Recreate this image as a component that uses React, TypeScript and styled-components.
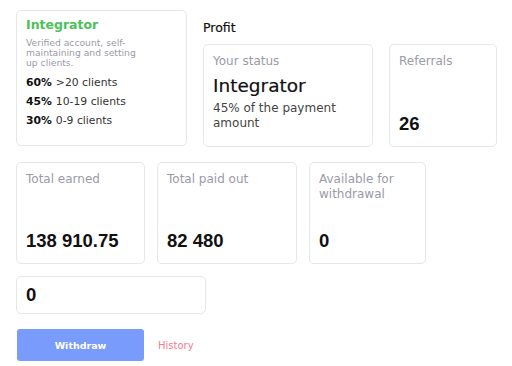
import React from "react";
import styled, { createGlobalStyle } from "styled-components";

const Global = createGlobalStyle`
  html, body { margin: 0; padding: 0; background: #fff; }
  body { font-family: "DejaVu Sans", "Noto Sans", sans-serif; color: #222; }
`;

const Page = styled.div`
  padding: 10px 0 0 16px;
`;

const TopRow = styled.div`
  display: flex;
  gap: 16px;
  align-items: flex-start;
`;

const Card = styled.div<{ $w: number; $h: number }>`
  box-sizing: border-box;
  flex: 0 0 auto;
  width: ${(p) => p.$w}px;
  height: ${(p) => p.$h}px;
  border: 1px solid #e6e7ec;
  border-radius: 5px;
  background: #fff;
  display: flex;
  flex-direction: column;
`;

const InfoCard = styled(Card)`
  padding: 5px 9px 6px;
`;

const Green = styled.div`
  color: #4cc15a;
  font-size: 12.5px;
  font-weight: 600;
  line-height: 18px;
`;

const Desc = styled.div`
  color: #9a9aa8;
  font-size: 9.2px;
  line-height: 10px;
  margin-top: 4px;
  width: 122px;
`;

const Tier = styled.div`
  font-size: 10.8px;
  color: #333;
  line-height: 19px;
  b { font-weight: 700; color: #111; margin-right: 4px; }
`;

const Tiers = styled.div`
  margin-top: 5px;
`;

const RightCol = styled.div`
  display: flex;
  flex-direction: column;
`;

const Title = styled.div`
  font-size: 12.5px;
  color: #111;
  line-height: 16px;
  margin-top: 10px;
  -webkit-text-stroke: 0.2px #111;
`;

const CardRow = styled.div<{ $gap: number }>`
  display: flex;
  gap: ${(p) => p.$gap}px;
`;

const StatCard = styled(Card)`
  padding: 9px 8px 7px 9px;
`;

const Label = styled.div`
  color: #9a9aa8;
  font-size: 12px;
  line-height: 15px;
`;

const Big = styled.div`
  font-size: 18.5px;
  color: #111;
  margin-top: 5px;
  line-height: 24px;
  -webkit-text-stroke: 0.2px #111;
`;

const Sub = styled.div`
  font-size: 12px;
  line-height: 14.5px;
  color: #444;
  margin-top: 3px;
`;

const Value = styled.div`
  margin-top: auto;
  font-family: "Liberation Sans", Arial, sans-serif;
  font-weight: 700;
  font-size: 18.5px;
  line-height: 22px;
  color: #111;
  margin-bottom: 4px;
`;

const Bottom = styled.div`
  margin-top: 12px;
`;

const Input = styled.div`
  box-sizing: border-box;
  width: 190px;
  height: 38px;
  border: 1px solid #e6e7ec;
  border-radius: 5px;
  display: flex;
  align-items: center;
  padding-left: 9px;
  font-family: "Liberation Sans", Arial, sans-serif;
  font-weight: 700;
  font-size: 18.5px;
  color: #111;
`;

const Actions = styled.div`
  display: flex;
  align-items: center;
  margin-top: 15px;
  margin-left: 1px;
  gap: 14px;
`;

const Button = styled.button`
  width: 127px;
  height: 32px;
  border: none;
  border-radius: 3px;
  background: #789bfc;
  color: #fff;
  font-family: "DejaVu Sans", sans-serif;
  font-weight: 700;
  font-size: 9.5px;
`;

const Link = styled.span`
  color: #f47b8b;
  font-size: 10px;
`;

export default function App() {
  return (
    <>
      <Global />
      <Page>
        <TopRow>
          <InfoCard $w={171} $h={136}>
            <Green>Integrator</Green>
            <Desc>Verified account, self-maintaining and setting up clients.</Desc>
            <Tiers>
              <Tier><b>60%</b>&gt;20 clients</Tier>
              <Tier><b>45%</b>10-19 clients</Tier>
              <Tier><b>30%</b>0-9 clients</Tier>
            </Tiers>
          </InfoCard>
          <RightCol>
            <Title>Profit</Title>
            <CardRow $gap={16} style={{ marginTop: 8 }}>
              <StatCard $w={170} $h={103}>
                <Label>Your status</Label>
                <Big>Integrator</Big>
                <Sub>45% of the payment amount</Sub>
              </StatCard>
              <StatCard $w={108} $h={103}>
                <Label>Referrals</Label>
                <Value>26</Value>
              </StatCard>
            </CardRow>
          </RightCol>
        </TopRow>
        <CardRow $gap={12} style={{ marginTop: 15 }}>
          <StatCard $w={129} $h={102}>
            <Label>Total earned</Label>
            <Value>138 910.75</Value>
          </StatCard>
          <StatCard $w={140} $h={102}>
            <Label>Total paid out</Label>
            <Value>82 480</Value>
          </StatCard>
          <StatCard $w={117} $h={102}>
            <Label>Available for withdrawal</Label>
            <Value>0</Value>
          </StatCard>
        </CardRow>
        <Bottom>
          <Input>0</Input>
          <Actions>
            <Button>Withdraw</Button>
            <Link>History</Link>
          </Actions>
        </Bottom>
      </Page>
    </>
  );
}
